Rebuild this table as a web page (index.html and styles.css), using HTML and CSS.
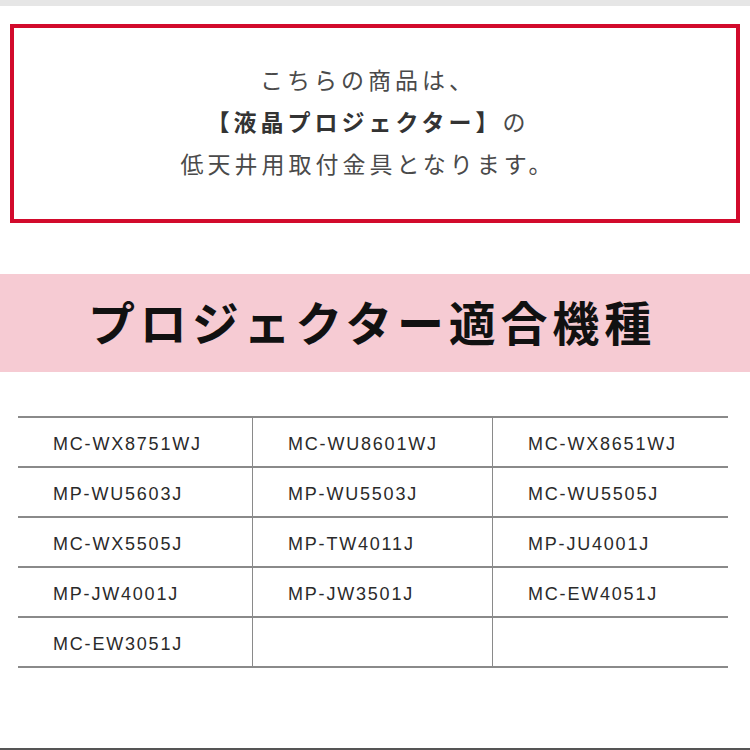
FILE: index.html
```html
<!DOCTYPE html>
<html lang="ja">
<head>
<meta charset="utf-8">
<link rel="stylesheet" href="styles.css">
</head>
<body>
<div class="topbar"></div>
<div class="notice">
  <p class="line">こちらの商品は、</p>
  <p class="line"><strong>【液晶プロジェクター】</strong>の</p>
  <p class="line">低天井用取付金具となります。</p>
</div>
<div class="band"><h1>プロジェクター適合機種</h1></div>
<div class="models">
  <div class="cell">MC-WX8751WJ</div>
  <div class="cell">MC-WU8601WJ</div>
  <div class="cell">MC-WX8651WJ</div>
  <div class="cell">MP-WU5603J</div>
  <div class="cell">MP-WU5503J</div>
  <div class="cell">MC-WU5505J</div>
  <div class="cell">MC-WX5505J</div>
  <div class="cell">MP-TW4011J</div>
  <div class="cell">MP-JU4001J</div>
  <div class="cell">MP-JW4001J</div>
  <div class="cell">MP-JW3501J</div>
  <div class="cell">MC-EW4051J</div>
  <div class="cell">MC-EW3051J</div>
  <div class="cell"></div>
  <div class="cell"></div>
</div>
<div class="bottomline"></div>
</body>
</html>
```
FILE: styles.css
```css
* { box-sizing: border-box; }
html, body { margin: 0; padding: 0; background: #fff; }
body {
  width: 750px;
  height: 750px;
  overflow: hidden;
  font-family: "Noto Sans CJK JP", "Noto Sans", sans-serif;
}
.topbar {
  height: 6px;
  background: #e6e6e6;
}
.notice {
  margin: 18px 0 0 10px;
  width: 730px;
  height: 199px;
  border: 4px solid #d20a2c;
  display: flex;
  flex-direction: column;
  justify-content: center;
  align-items: center;
  color: #4a4a4a;
  font-size: 23px;
  letter-spacing: 4px;
  padding: 0 14px 6px 0;
}
.line {
  margin: 0;
  line-height: 42px;
}
.line strong {
  color: #333;
  font-weight: 700;
}
.band {
  margin-top: 51px;
  height: 98px;
  background: #f6cbd3;
  display: flex;
  align-items: center;
  justify-content: center;
  padding: 0 6px 6px 0;
}
.band h1 {
  margin: 0;
  font-size: 47px;
  font-weight: 700;
  letter-spacing: 4.8px;
  color: #111;
  line-height: 1;
}
.models {
  margin: 44px 0 0 18px;
  width: 710px;
  display: grid;
  grid-template-columns: 234px 240px 236px;
  border-top: 2px solid #8a8a8a;
}
.cell {
  height: 50px;
  border-bottom: 2px solid #8a8a8a;
  display: flex;
  align-items: center;
  padding: 5px 0 0 35px;
  font-family: "Liberation Sans", Arial, sans-serif;
  font-size: 18px;
  letter-spacing: 1.8px;
  color: #2a2a2a;
}
.cell:nth-child(3n+2), .cell:nth-child(3n) {
  border-left: 1px solid #8a8a8a;
}
.bottomline {
  margin-top: 80px;
  height: 2px;
  background: #555;
}
```
